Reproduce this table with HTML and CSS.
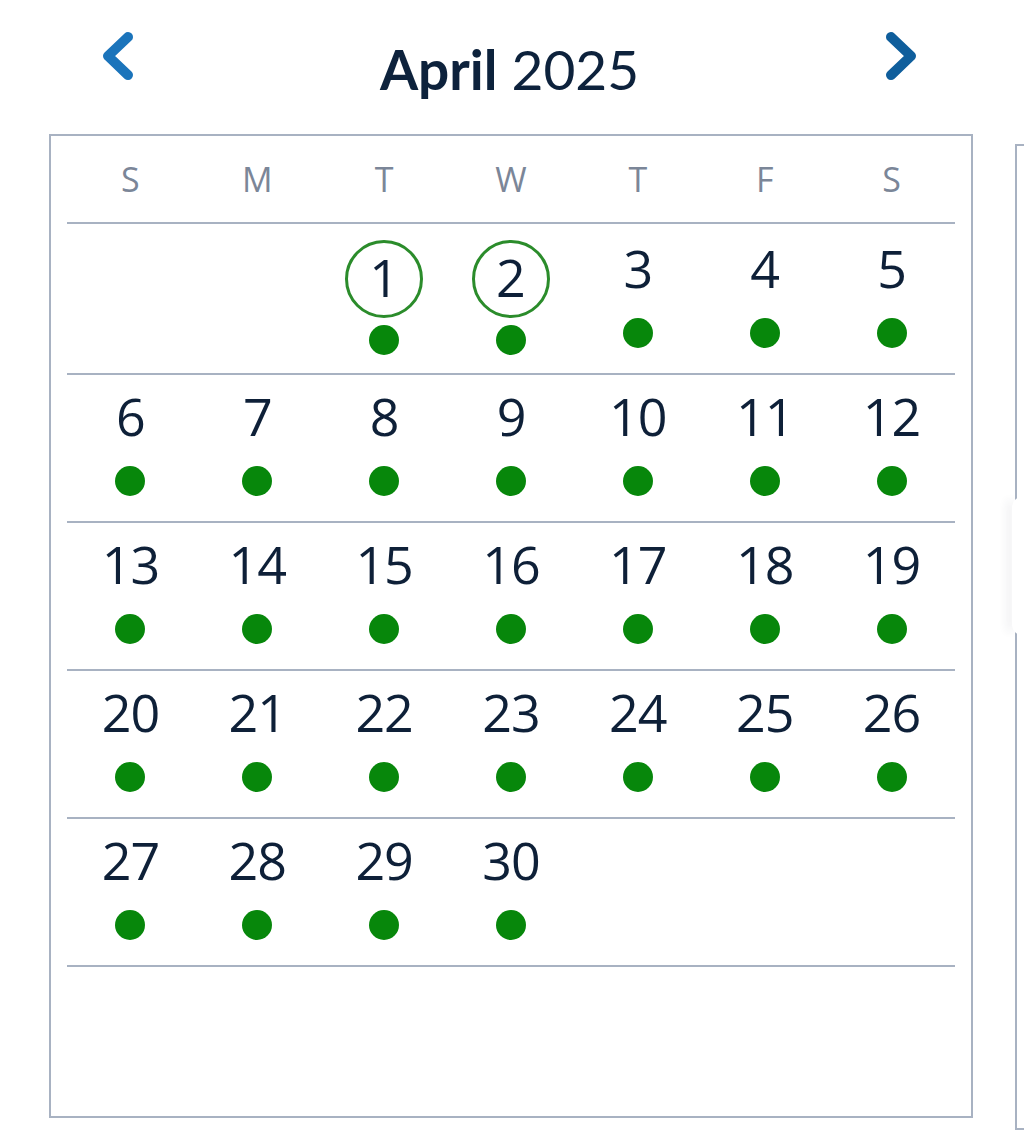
FILE: index.html
```html
<!DOCTYPE html>
<html lang="en">
<head>
<meta charset="utf-8">
<title>Calendar</title>
<link rel="stylesheet" href="styles.css">
</head>
<body>
<div class="page">
  <section class="month">
    <header class="month-head">
      <button class="nav nav-prev" aria-label="Previous month">
        <svg width="34" height="50" viewBox="0 0 34 50"><path d="M27 6 L7 25 L27 44" fill="none" stroke="currentColor" stroke-width="10" stroke-linecap="round" stroke-linejoin="round"/></svg>
      </button>
      <h2 class="title"><b>April</b> 2025</h2>
      <button class="nav nav-next" aria-label="Next month">
        <svg width="34" height="50" viewBox="0 0 34 50"><path d="M7 6 L27 25 L7 44" fill="none" stroke="currentColor" stroke-width="10" stroke-linecap="round" stroke-linejoin="round"/></svg>
      </button>
    </header>
    <div class="cal">
      <div class="weekdays">
        <span>S</span><span>M</span><span>T</span><span>W</span><span>T</span><span>F</span><span>S</span>
      </div>
      <div class="week week-first">
        <div class="day"></div>
        <div class="day"></div>
        <div class="day"><span class="num sel">1</span><span class="dot"></span></div>
        <div class="day"><span class="num sel">2</span><span class="dot"></span></div>
        <div class="day"><span class="num">3</span><span class="dot"></span></div>
        <div class="day"><span class="num">4</span><span class="dot"></span></div>
        <div class="day"><span class="num">5</span><span class="dot"></span></div>
      </div>
      <div class="week">
        <div class="day"><span class="num">6</span><span class="dot"></span></div>
        <div class="day"><span class="num">7</span><span class="dot"></span></div>
        <div class="day"><span class="num">8</span><span class="dot"></span></div>
        <div class="day"><span class="num">9</span><span class="dot"></span></div>
        <div class="day"><span class="num">10</span><span class="dot"></span></div>
        <div class="day"><span class="num">11</span><span class="dot"></span></div>
        <div class="day"><span class="num">12</span><span class="dot"></span></div>
      </div>
      <div class="week">
        <div class="day"><span class="num">13</span><span class="dot"></span></div>
        <div class="day"><span class="num">14</span><span class="dot"></span></div>
        <div class="day"><span class="num">15</span><span class="dot"></span></div>
        <div class="day"><span class="num">16</span><span class="dot"></span></div>
        <div class="day"><span class="num">17</span><span class="dot"></span></div>
        <div class="day"><span class="num">18</span><span class="dot"></span></div>
        <div class="day"><span class="num">19</span><span class="dot"></span></div>
      </div>
      <div class="week">
        <div class="day"><span class="num">20</span><span class="dot"></span></div>
        <div class="day"><span class="num">21</span><span class="dot"></span></div>
        <div class="day"><span class="num">22</span><span class="dot"></span></div>
        <div class="day"><span class="num">23</span><span class="dot"></span></div>
        <div class="day"><span class="num">24</span><span class="dot"></span></div>
        <div class="day"><span class="num">25</span><span class="dot"></span></div>
        <div class="day"><span class="num">26</span><span class="dot"></span></div>
      </div>
      <div class="week">
        <div class="day"><span class="num">27</span><span class="dot"></span></div>
        <div class="day"><span class="num">28</span><span class="dot"></span></div>
        <div class="day"><span class="num">29</span><span class="dot"></span></div>
        <div class="day"><span class="num">30</span><span class="dot"></span></div>
        <div class="day"></div>
        <div class="day"></div>
        <div class="day"></div>
      </div>
    </div>
  </section>
  <section class="month month-next">
    <div class="cal cal-next"></div>
  </section>
</div>
<div class="float-tab"></div>
</body>
</html>
```

FILE: styles.css
```css
html, body {
  margin: 0;
  padding: 0;
  background: #ffffff;
}

body {
  width: 1024px;
  height: 1148px;
  overflow: hidden;
  position: relative;
  font-family: "Open Sans", "Noto Sans", sans-serif;
  color: #0e2038;
}

.page {
  display: flex;
  gap: 42px;
  padding-left: 49px;
}

.month {
  flex: none;
  width: 924px;
}

.month-next {
  width: 9px;
}

.month-head {
  display: grid;
  grid-template-columns: 34px 1fr 34px;
  align-items: start;
  height: 134px;
  box-sizing: border-box;
  padding: 0 55px 0 52px;
}

.nav {
  margin: 31px 0 0;
  padding: 0;
  border: 0;
  background: none;
  width: 34px;
  height: 50px;
  display: block;
}

.nav svg {
  display: block;
}

.nav-prev {
  color: #1b74bb;
}

.nav-next {
  color: #0f5e9c;
}

.title {
  margin: 34px 0 0;
  font-family: Lato, "Open Sans", sans-serif;
  font-size: 55px;
  line-height: 70px;
  font-weight: 400;
  text-align: center;
  color: #0d223c;
}

.title b {
  font-weight: 700;
}

.cal {
  box-sizing: border-box;
  height: 984px;
  border: 2px solid #a8b2c2;
  padding: 0 16px;
}

.weekdays {
  display: grid;
  grid-template-columns: repeat(7, 1fr);
  align-items: center;
  height: 86px;
  border-bottom: 2px solid #a8b2c2;
  font-size: 34px;
  font-weight: 380;
  line-height: 86px;
  color: #7b8698;
  text-align: center;
}

.week {
  display: grid;
  grid-template-columns: repeat(7, 1fr);
  box-sizing: border-box;
  height: 148px;
  border-bottom: 2px solid #a8b2c2;
}

.week-first {
  height: 151px;
}

.day {
  display: flex;
  flex-direction: column;
  align-items: center;
  padding-top: 11px;
}

.week-first .day {
  padding-top: 14px;
}

.num {
  display: block;
  height: 60px;
  font-size: 52px;
  line-height: 60px;
  font-weight: 370;
  letter-spacing: -1px;
  color: #0e2038;
}

.num.sel {
  box-sizing: border-box;
  width: 78px;
  height: 78px;
  margin-top: 2px;
  margin-bottom: -13px;
  border: 3px solid #2b8c2b;
  border-radius: 50%;
  display: flex;
  align-items: center;
  justify-content: center;
  padding-bottom: 4px;
  letter-spacing: 0;
}

.dot {
  display: block;
  width: 30px;
  height: 30px;
  margin-top: 20px;
  border-radius: 50%;
  background: #07870b;
}

.cal-next {
  width: 9px;
  height: 986px;
  margin-top: 144px;
  border-right: 0;
  padding: 0;
}

.float-tab {
  position: absolute;
  left: 1012px;
  top: 496px;
  width: 12px;
  height: 140px;
  background: #ffffff;
  border-radius: 30px 0 0 30px;
  box-shadow: -8px 0 10px -4px rgba(40, 50, 70, 0.12);
}
```
